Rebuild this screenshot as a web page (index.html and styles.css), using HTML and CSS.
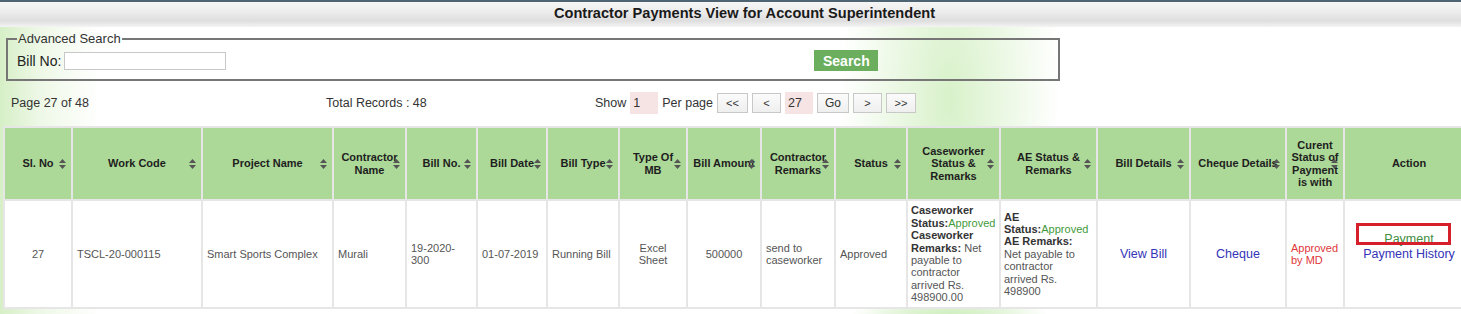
FILE: index.html
```html
<!DOCTYPE html>
<html lang="en">
<head>
    <meta charset="UTF-8">
    <meta name="viewport" content="width=device-width, initial-scale=1.0">
    <title>Contractor Payments View</title>
    <link rel="stylesheet" href="styles.css">
</head>
<body>
    <div class="page-title">
        <h2>Contractor Payments View for Account Superintendent</h2>
    </div>

    <fieldset class="search-box">
        <legend>Advanced Search</legend>
        <div class="search-row">
            <label for="billNo">Bill No:</label>
            <input type="text" id="billNo" class="bill-input">
            <button class="search-btn">Search</button>
        </div>
    </fieldset>

    <div class="pager">
        <div class="pager-info">Page 27 of 48</div>
        <div class="pager-total">Total Records : 48</div>
        <div class="pager-controls">
            <span>Show</span>
            <input type="text" class="pager-input" value="1">
            <span class="per-page">Per page</span>
            <button class="pager-btn">&lt;&lt;</button>
            <button class="pager-btn narrow">&lt;</button>
            <input type="text" class="pager-input" value="27">
            <button class="pager-btn go">Go</button>
            <button class="pager-btn narrow">&gt;</button>
            <button class="pager-btn last">&gt;&gt;</button>
        </div>
    </div>

    <table class="grid">
        <colgroup>
            <col style="width:68px">
            <col style="width:130px">
            <col style="width:131px">
            <col style="width:73px">
            <col style="width:71px">
            <col style="width:70px">
            <col style="width:72px">
            <col style="width:68px">
            <col style="width:74px">
            <col style="width:74px">
            <col style="width:72px">
            <col style="width:93px">
            <col style="width:97px">
            <col style="width:93px">
            <col style="width:96px">
            <col style="width:58px">
            <col style="width:130px">
        </colgroup>
        <thead>
            <tr>
                <th>Sl. No<i class="sort"></i></th>
                <th>Work Code<i class="sort"></i></th>
                <th>Project Name<i class="sort"></i></th>
                <th>Contractor Name<i class="sort"></i></th>
                <th>Bill No.<i class="sort"></i></th>
                <th>Bill Date<i class="sort"></i></th>
                <th>Bill Type<i class="sort"></i></th>
                <th>Type Of MB<i class="sort"></i></th>
                <th>Bill Amount<i class="sort"></i></th>
                <th>Contractor Remarks<i class="sort"></i></th>
                <th>Status<i class="sort"></i></th>
                <th>Caseworker Status &amp; Remarks<i class="sort"></i></th>
                <th>AE Status &amp; Remarks<i class="sort"></i></th>
                <th>Bill Details<i class="sort"></i></th>
                <th>Cheque Details<i class="sort"></i></th>
                <th>Curent Status of Payment is with<i class="sort"></i></th>
                <th>Action</th>
            </tr>
        </thead>
        <tbody>
            <tr>
                <td class="center">27</td>
                <td>TSCL-20-000115</td>
                <td>Smart Sports Complex</td>
                <td>Murali</td>
                <td>19-2020-300</td>
                <td>01-07-2019</td>
                <td>Running Bill</td>
                <td class="center">Excel Sheet</td>
                <td class="center">500000</td>
                <td>send to caseworker</td>
                <td>Approved</td>
                <td class="remarks"><b>Caseworker Status:</b><span class="ok">Approved</span> <b>Caseworker Remarks:</b> Net payable to contractor arrived Rs. 498900.00</td>
                <td class="remarks"><b>AE Status:</b><span class="ok">Approved</span> <b>AE Remarks:</b> Net payable to contractor arrived Rs. 498900</td>
                <td class="center"><a href="#" class="link">View Bill</a></td>
                <td class="center"><a href="#" class="link">Cheque</a></td>
                <td class="md">Approved by MD</td>
                <td class="center">
                    <div class="actions">
                        <span class="marker"></span>
                        <a href="#" class="link pay">Payment</a>
                        <a href="#" class="link">Payment History</a>
                    </div>
                </td>
            </tr>
        </tbody>
    </table>
</body>
</html>
```

FILE: styles.css
```css
html, body {
    margin: 0;
    overflow: hidden;
}
body {
    font-family: Arial, "Liberation Sans", sans-serif;
    font-size: 12px;
    color: #333;
    min-height: 314px;
    background:
        radial-gradient(ellipse 110px 300px at 950px 100px, rgba(212, 240, 196, 0.9), rgba(255, 255, 255, 0)),
        radial-gradient(ellipse 100px 40px at 950px 320px, rgba(196, 234, 176, 0.9), rgba(255, 255, 255, 0)),
        linear-gradient(to right, #d6efc6 0, #eef8e7 40px, #fff 100px, #fff 100%);
}
.page-title {
    height: 25px;
    border-top: 2px solid #4f6473;
    background: linear-gradient(to bottom, #f6f6f6 0, #ececec 40%, #dedede 75%, #f4f4f4 100%);
    text-align: center;
}
.page-title h2 {
    margin: 0;
    padding: 3px 0 0 28px;
    font-size: 14.6px;
    line-height: 17px;
    color: #1a1a1a;
}
.search-box {
    width: 1054px;
    box-sizing: border-box;
    margin: 4px 0 0 6px;
    padding: 0 9px 8px;
    border: 2px solid #767676;
}
.search-box legend {
    padding: 0 1px;
    font-size: 13px;
    color: #333;
}
.search-row {
    display: flex;
    align-items: center;
    padding-top: 4px;
    font-size: 14px;
}
.search-row label {
    margin-right: 3px;
    color: #222;
}
.bill-input {
    width: 162px;
    height: 18px;
    box-sizing: border-box;
    border: 1px solid #c8c8c8;
    padding: 0 3px;
}
.search-btn {
    margin-left: 588px;
    width: 64px;
    height: 21px;
    border: none;
    background: #6aae5e;
    color: #fff;
    font-family: Arial, "Liberation Sans", sans-serif;
    font-weight: bold;
    font-size: 14px;
    padding: 0;
}
.pager {
    display: flex;
    align-items: center;
    margin-top: 11px;
    padding-left: 11px;
    height: 22px;
    font-size: 12.5px;
    color: #333;
}
.pager-info {
    width: 315px;
}
.pager-total {
    width: 269px;
}
.pager-controls {
    display: flex;
    align-items: center;
    gap: 4px;
}
.pager-input {
    width: 28px;
    height: 22px;
    box-sizing: border-box;
    border: none;
    background: #f6e3e3;
    padding: 0 3px;
    font-size: 12.5px;
    color: #333;
    font-family: Arial, "Liberation Sans", sans-serif;
}
.per-page {
    margin-right: 0;
}
.pager-btn {
    width: 31px;
    height: 20px;
    box-sizing: border-box;
    border: 1px solid #c8c8c8;
    background: linear-gradient(to bottom, #fbfbfb, #efefef);
    font-family: Arial, "Liberation Sans", sans-serif;
    font-size: 11px;
    color: #333;
    padding: 0;
}
.pager-btn.narrow {
    width: 29px;
}
.pager-btn.last {
    width: 30px;
}
.pager-btn.go {
    width: 32px;
    font-size: 12px;
}
.grid {
    margin: 12px 0 0 3px;
    width: 1470px;
    table-layout: fixed;
    border-collapse: collapse;
    background: #fff;
}
.grid th, .grid td {
    border: 2px solid #e6e6e6;
}
.grid th {
    position: relative;
    height: 67px;
    padding: 2px 3px;
    background: #acd898;
    font-size: 11px;
    line-height: 12.4px;
    color: #1e1e1e;
    font-weight: bold;
}
.sort {
    position: absolute;
    right: 5px;
    top: 50%;
    width: 7px;
    height: 10px;
    margin-top: -5px;
    background: url("data:image/svg+xml;utf8,<svg xmlns='http://www.w3.org/2000/svg' width='7' height='10'><path d='M0 4 L3.5 0 L7 4 Z M0 6 L3.5 10 L7 6 Z' fill='%23555'/></svg>") no-repeat;
}
.grid td {
    height: 102px;
    padding: 2px 4px;
    font-size: 11px;
    line-height: 12.4px;
    color: #555;
    vertical-align: middle;
}
.grid td.remarks {
    padding: 2px 8px 2px 3px;
}
.grid td b {
    color: #333;
}
.grid td.center {
    text-align: center;
}
.grid td.md {
    color: #e0373a;
}
.ok {
    color: #3f9a3a;
}
.link {
    color: #3434b8;
    text-decoration: none;
    font-size: 12.5px;
    line-height: 15px;
}
.actions {
    position: relative;
    display: flex;
    flex-direction: column;
    align-items: center;
    margin-top: -14px;
}
.actions .pay {
    color: #3e8e3e;
}
.marker {
    position: absolute;
    left: 7px;
    top: -9px;
    width: 95px;
    height: 22px;
    box-sizing: border-box;
    border: 3px solid #d5202b;
}
```
